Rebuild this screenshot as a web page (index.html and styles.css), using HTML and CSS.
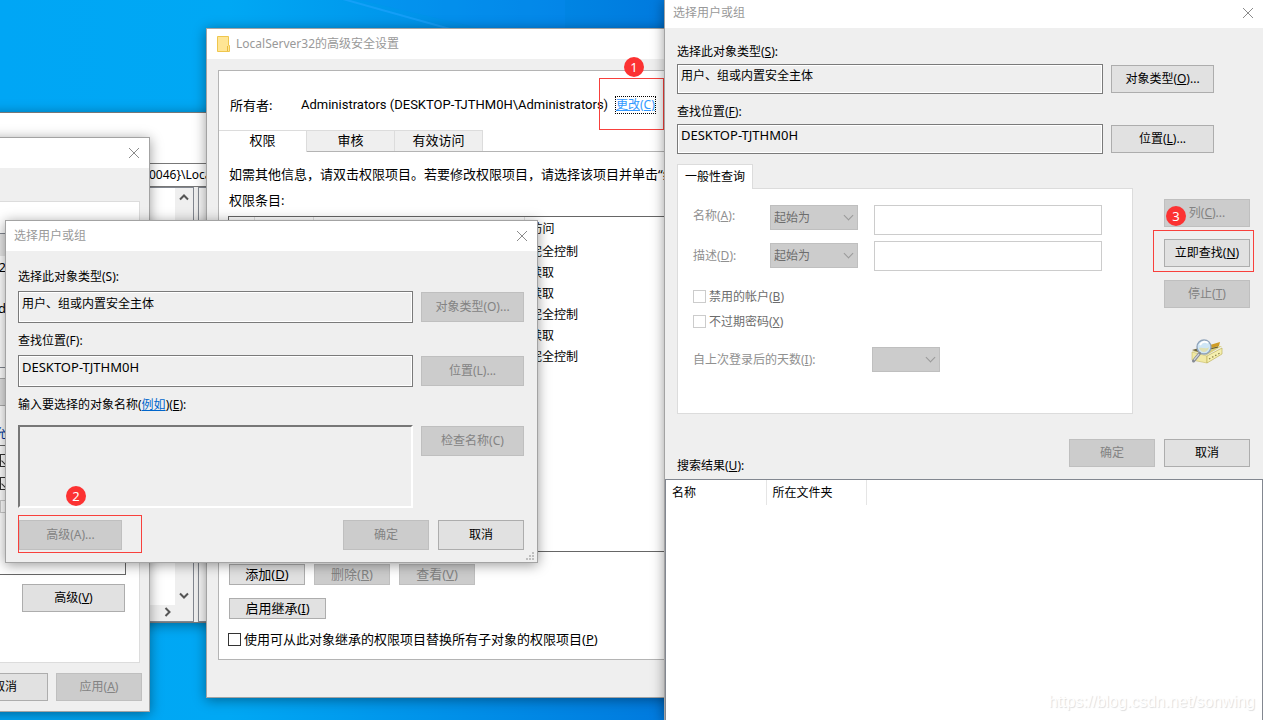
FILE: index.html
```html
<!DOCTYPE html>
<html lang="zh-CN">
<head>
<meta charset="utf-8">
<title>选择用户或组</title>
<link rel="stylesheet" href="styles.css">
</head>
<body>
<main class="desktop">
  <svg class="ray" viewBox="0 0 240 60" aria-hidden="true"><path d="M0-6 150 36" stroke="#22a4ff" stroke-width="2" opacity=".6"/><path d="M0-8 240 48V-8Z" fill="#0a8cf8" opacity=".25"/></svg>

  <section class="window editor">
    <div class="address">0046}\Loca</div>
    <div class="panes">
      <div class="tree">
        <div class="tree-row">
          <div class="vscroll">
            <svg viewBox="0 0 10 7" aria-hidden="true"><path d="M1 5.5 5 1.5 9 5.5" /></svg>
            <svg viewBox="0 0 10 7" aria-hidden="true"><path d="M1 1.5 5 5.5 9 1.5" /></svg>
          </div>
        </div>
        <div class="hscroll"><svg viewBox="0 0 7 10" aria-hidden="true"><path d="M1.5 1 5.5 5 1.5 9" /></svg></div>
      </div>
      <div class="values"></div>
    </div>
  </section>

  <section class="window perms">
    <header class="titlebar"><span></span><button class="close" aria-label="关闭"><svg viewBox="0 0 12 12"><path d="M1 1 11 11M11 1 1 11"/></svg></button></header>
    <div class="perms-panel">
      <div class="group-list"><div class="group-head"></div><span>2</span><span>d</span></div>
      <div class="perms-actions"><button class="btn">删除(R)...</button></div>
      <div class="perms-label">允</div>
      <div class="allow-list">
        <input type="checkbox" class="check" aria-label="完全控制" checked>
        <input type="checkbox" class="check" aria-label="读取" checked>
        <input type="checkbox" class="check" aria-label="特殊权限" disabled>
      </div>
      <div class="perms-more"><button class="btn">高级(<u>V</u>)</button></div>
    </div>
    <footer class="perms-foot"><button class="btn narrow">取消</button><button class="btn narrow" disabled>应用(<u>A</u>)</button></footer>
  </section>

  <section class="window advanced">
    <header class="titlebar">
      <span class="caption"><svg class="folder" viewBox="0 0 14 16" aria-hidden="true"><path d="M1.500.5h11v9h1v6H1.500Z" fill="#ffe594" stroke="#efc64d"/><path d="M11.500 10v5" stroke="#e9b93e"/></svg>LocalServer32的高级安全设置</span>
    </header>
    <div class="adv-panel">
      <div class="owner"><span class="owner-key">所有者:</span><span class="owner-name">Administrators (DESKTOP-TJTHM0H\Administrators)</span><a class="change" href="#">更改(C)</a></div>
      <nav class="tabs"><button class="tab active">权限</button><button class="tab">审核</button><button class="tab">有效访问</button></nav>
      <div class="adv-body">
        <p>如需其他信息，请双击权限项目。若要修改权限项目，请选择该项目并单击“编</p>
        <p>权限条目:</p>
        <div class="entries">
          <table>
            <colgroup><col class="c-icon"><col class="c-type"><col class="c-who"><col></colgroup>
            <thead><tr><th></th><th></th><th></th><th>访问</th></tr></thead>
            <tbody>
              <tr><td></td><td></td><td></td><td>完全控制</td></tr>
              <tr><td></td><td></td><td></td><td>读取</td></tr>
              <tr><td></td><td></td><td></td><td>读取</td></tr>
              <tr><td></td><td></td><td></td><td>完全控制</td></tr>
              <tr><td></td><td></td><td></td><td>读取</td></tr>
              <tr><td></td><td></td><td></td><td>完全控制</td></tr>
            </tbody>
          </table>
        </div>
        <div class="adv-actions"><button class="btn small">添加(<u>D</u>)</button><button class="btn small" disabled>删除(<u>R</u>)</button><button class="btn small" disabled>查看(<u>V</u>)</button></div>
        <button class="btn small inherit">启用继承(<u>I</u>)</button>
        <label class="replace"><input type="checkbox" class="check"><span>使用可从此对象继承的权限项目替换所有子对象的权限项目(<u>P</u>)</span></label>
      </div>
    </div>
  </section>
  <div class="mark mark-1"><b class="badge">1</b></div>

  <section class="window picker">
    <header class="titlebar"><span class="caption">选择用户或组</span><button class="close" aria-label="关闭"><svg viewBox="0 0 12 12"><path d="M1 1 11 11M11 1 1 11"/></svg></button></header>
    <form class="picker-form">
      <label class="wide" for="p-type">选择此对象类型(S):</label>
      <input id="p-type" class="field" readonly value="用户、组或内置安全主体"><button type="button" class="btn tall" disabled>对象类型(O)...</button>
      <label class="wide" for="p-loc">查找位置(F):</label>
      <input id="p-loc" class="field latin" readonly value="DESKTOP-TJTHM0H"><button type="button" class="btn tall" disabled>位置(L)...</button>
      <label class="wide" for="p-names">输入要选择的对象名称(<a href="#">例如</a>)(<u>E</u>):</label>
      <textarea id="p-names" class="names"></textarea><button type="button" class="btn tall check-names" disabled>检查名称(C)</button>
    </form>
    <footer class="picker-foot"><button class="btn tall" disabled>高级(A)...</button><span class="spacer"></span><button class="btn tall narrow" disabled>确定</button><button class="btn tall narrow">取消</button></footer>
    <svg class="grip" viewBox="0 0 8 8" aria-hidden="true"><path d="M6 0h2v2H6ZM3 3h2v2H3ZM6 3h2v2H6ZM0 6h2v2H0ZM3 6h2v2H3ZM6 6h2v2H6Z"/></svg>
    <div class="mark mark-2"><b class="badge">2</b></div>
  </section>

  <section class="window search">
    <header class="titlebar"><span class="caption">选择用户或组</span><button class="close" aria-label="关闭"><svg viewBox="0 0 12 12"><path d="M1 1 11 11M11 1 1 11"/></svg></button></header>
    <form class="search-form">
      <div class="search-top">
        <label class="wide" for="s-type">选择此对象类型(<u>S</u>):</label>
        <input id="s-type" class="field" readonly value="用户、组或内置安全主体"><button type="button" class="btn">对象类型(<u>O</u>)...</button>
        <label class="wide" for="s-loc">查找位置(<u>F</u>):</label>
        <input id="s-loc" class="field latin" readonly value="DESKTOP-TJTHM0H"><button type="button" class="btn">位置(<u>L</u>)...</button>
      </div>
      <div class="search-mid">
        <div class="query">
          <button type="button" class="query-tab">一般性查询</button>
          <div class="query-panel">
            <div class="query-row"><label for="q-name">名称(<u>A</u>):</label><span class="pick"><select id="q-name" disabled><option>起始为</option></select></span><input aria-label="名称" disabled></div>
            <div class="query-row"><label for="q-desc">描述(<u>D</u>):</label><span class="pick"><select id="q-desc" disabled><option>起始为</option></select></span><input aria-label="描述" disabled></div>
            <label class="opt first"><input type="checkbox" class="check" disabled><span>禁用的帐户(<u>B</u>)</span></label>
            <label class="opt"><input type="checkbox" class="check" disabled><span>不过期密码(<u>X</u>)</span></label>
            <div class="days"><label for="q-days">自上次登录后的天数(<u>I</u>):</label><span class="pick"><select id="q-days" disabled><option></option></select></span></div>
          </div>
        </div>
        <div class="search-side">
          <div class="cols"><button type="button" class="btn narrow" disabled>列(<u>C</u>)...</button><b class="badge">3</b></div>
          <div class="find"><button type="button" class="btn narrow">立即查找(<u>N</u>)</button><div class="mark mark-3"></div></div>
          <button type="button" class="btn narrow" disabled>停止(<u>T</u>)</button>
          <svg class="lens" viewBox="0 0 32 27" aria-hidden="true">
            <path d="M1 12 12 8 31 7 16 16Z" fill="#d9cf7c"/>
            <path d="M1 11 8 9 16 13 14 15Z" fill="#6e6440"/>
            <path d="M1 13 16 17V24L1 21Z" fill="#f1e9a4" stroke="#c9bc63" stroke-width=".6"/>
            <path d="M16 17 31 9V15L16 24Z" fill="#f5efaf" stroke="#b7a94c" stroke-width=".6"/>
            <path d="M18 20 29 14" stroke="#8b804a" stroke-width="1.2" stroke-dasharray="1.5 2"/>
            <path d="M19 6 29 3 28 7 20 9Z" fill="#cf9c25"/><path d="M19 10 27 8" stroke="#5c5130" stroke-width="1"/>
            <circle cx="13" cy="8" r="7" fill="#cfe6f5" stroke="#8fa3ba" stroke-width="1.3"/>
            <path d="M8 9c4-1 7 2 10-1-1 6-8 7-10 1Z" fill="#dfe0b4"/><path d="M9 6c2-4 6-4 8-2" stroke="#fff" stroke-width="2" fill="none"/>
            <path d="M8.500 14.500 2.500 22" stroke="#858a94" stroke-width="3" stroke-linecap="round"/><path d="M8 15 3 21" stroke="#d0d4da" stroke-width="1.200"/>
          </svg>
        </div>
      </div>
      <div class="search-foot"><span class="results-label">搜索结果(<u>U</u>):</span><span class="spacer"></span><button type="button" class="btn narrow" disabled>确定</button><button type="button" class="btn narrow">取消</button></div>
    </form>
    <div class="results"><table><thead><tr><th>名称</th><th>所在文件夹</th></tr></thead></table></div>
    <div class="watermark">https://blog.csdn.net/sonwing</div>
  </section>
</main>
</body>
</html>
```
FILE: styles.css
```css
* { box-sizing: border-box; }

body {
  margin: 0;
  font: 12px/16px "Noto Sans", "Noto Sans CJK SC", sans-serif;
  color: #000;
}

button, input, select, textarea { font: inherit; color: inherit; margin: 0; border-radius: 0; }
p { margin: 0; }
a { color: #0066cc; }

.desktop {
  position: relative;
  height: 100vh;
  overflow: hidden;
  background: linear-gradient(90deg, #00a6f5 0, #00a8f4 18%, #0078dd 54%, #0064d0 100%);
}
.ray { position: absolute; left: 325px; top: 0; width: 240px; height: 60px; }

/* windows */
.window {
  position: absolute;
  display: flex;
  flex-direction: column;
  background: #efefef;
  border: 1px solid #a3a3a3;
  box-shadow: 0 2px 12px rgba(0, 0, 0, .4);
}
.titlebar {
  display: flex;
  justify-content: space-between;
  align-items: center;
  height: 30px;
  padding: 0 9px 0 8px;
  background: #fff;
  color: #999;
}
.caption { display: flex; align-items: center; gap: 6px; }
.close { border: 0; background: none; padding: 0; width: 12px; height: 12px; }
.close svg { display: block; width: 12px; height: 12px; fill: none; stroke: #8b8b8b; }
.spacer { flex: 1; }

/* shared controls */
.btn {
  width: 103px;
  height: 28px;
  padding: 0;
  background: #e1e1e1;
  border: 1px solid #adadad;
  white-space: nowrap;
}
.btn.tall { height: 30px; }
.btn.narrow { width: 86px; }
.btn:disabled { background: #ccc; border-color: #bfbfbf; color: #838383; }
.check {
  appearance: none;
  flex: none;
  width: 13px;
  height: 13px;
  background: #fff;
  border: 1px solid #333;
}
.check:checked::after {
  content: "";
  display: block;
  width: 8px;
  height: 5px;
  margin: 2px 0 0 1px;
  border: solid #333;
  border-width: 0 0 1px 1px;
  transform: rotate(-45deg);
}
.check:disabled { border-color: #ccc; }
.field {
  width: 100%;
  min-width: 0;
  height: 30px;
  padding: 0 3px 8px;
  background: #efefef;
  border: 1px solid #7a7a7a;
  box-shadow: inset 0 0 0 1px #fff;
}
.latin { font-size: 13px; }
.wide { grid-column: 1 / -1; }
.badge {
  display: block;
  width: 20px;
  height: 20px;
  border-radius: 50%;
  background: #fc3232;
  color: #fff;
  font-size: 13px;
  font-weight: 400;
  line-height: 20px;
  text-align: center;
}
.mark { position: absolute; border: 1px solid #f8403c; }
.mark .badge { position: absolute; }

/* registry editor */
.editor { left: -10px; top: 112px; width: 700px; height: 511px; background: #fff; border-color: #777; }
.address {
  height: 24px;
  margin-top: 50px;
  padding: 3px 0 0 157px;
  border: 1px solid #777;
}
.panes { flex: 1; display: flex; gap: 4px; background: #efefef; }
.tree { width: 203px; display: flex; flex-direction: column; border: 1px solid #828790; background: #fff; }
.tree-row { flex: 1; display: flex; justify-content: flex-end; }
.vscroll {
  width: 18px;
  display: flex;
  flex-direction: column;
  justify-content: space-between;
  align-items: center;
  padding: 6px 0;
  background: #efefef;
}
.vscroll svg { width: 10px; height: 7px; fill: none; stroke: #555; stroke-width: 2; }
.hscroll { height: 16px; padding: 2px 22px; display: flex; justify-content: flex-end; background: #efefef; }
.hscroll svg { width: 7px; height: 10px; fill: none; stroke: #555; stroke-width: 2; }
.values { flex: 1; border: 1px solid #828790; background: #f7f7f7; }

/* permissions */
.perms { left: -260px; top: 137px; width: 410px; height: 575px; }
.perms-panel {
  margin: 33px 9px 0 0;
  height: 462px;
  padding: 31px 13px 0 0;
  background: #fff;
  border: 1px solid #dcdcdc;
}
.group-list { height: 135px; border: 1px solid #828790; padding-right: 119px; text-align: right; font-size: 13px; }
.group-head { height: 22px; margin-right: -119px; background: #e8e8e8; }
.group-list span { display: block; padding-top: 3px; height: 41px; }
.perms-actions { margin-top: 10px; padding-right: 117px; text-align: right; }
.perms-label { height: 39px; padding: 20px 119px 0 0; text-align: right; color: #003399; }
.allow-list {
  height: 130px;
  padding: 8px 112px 0 0;
  display: flex;
  flex-direction: column;
  align-items: flex-end;
  gap: 10px;
  border: 1px solid #666;
}
.perms-more { margin-top: 9px; padding-right: 1px; text-align: right; }
.perms-foot { display: flex; justify-content: flex-end; gap: 8px; padding: 10px 7px 0 0; }

/* advanced security */
.advanced { left: 206px; top: 28px; right: 580px; height: 670px; font-size: 13px; white-space: nowrap; overflow: hidden; }
.folder { width: 14px; height: 16px; }
.advanced .titlebar { flex: none; padding-left: 9px; font-size: 12px; }
.adv-panel { margin: 11px 0 0 11px; height: 590px; background: #fff; border: 1px solid #b4b4b4; }
.owner { display: flex; align-items: center; height: 59px; padding: 8px 0 0 11px; }
.owner-key { width: 71px; }
.owner-name { width: 315px; font-family: Roboto, "Noto Sans", sans-serif; }
.change { font-size: 12px; color: #3399ff; outline: 1px dotted #000; }
.tabs { display: flex; height: 22px; border-bottom: 1px solid #b4b4b4; }
.tab { width: 88px; padding: 0 0 2px; background: #efefef; border: 1px solid #dcdcdc; border-width: 1px 1px 0 0; }
.tab.active { background: #fff; margin-bottom: -1px; padding-bottom: 3px; }
.adv-body { padding: 14px 0 0 9px; }
.adv-body p { height: 26px; padding-left: 1px; }
.entries { height: 336px; margin-right: -4px; margin-top: -2px; border: 1px solid #666; }
.entries table { width: 100%; table-layout: fixed; border-collapse: collapse; font-size: 12px; }
.c-icon { width: 25px; }
.c-type { width: 59px; }
.c-who { width: 211px; }
.entries th { height: 24px; padding: 0 6px; border-right: 1px solid #e0e0e0; font-weight: 400; text-align: left; }
.entries td { height: 21px; padding: 0 6px; }
.adv-actions { display: flex; gap: 9px; margin: 12px 0 13px 1px; }
.btn.small { width: 76px; height: 21px; line-height: 16px; padding-bottom: 2px; }
.btn.small.inherit { display: block; width: 97px; margin-left: 1px; }
.replace { display: flex; align-items: center; gap: 3px; margin-top: 12px; }
.mark-1 { left: 599px; top: 78px; width: 65px; height: 52px; }
.mark-1 .badge { left: 24px; top: -22px; }

/* user picker */
.picker { left: 5px; top: 220px; width: 533px; height: 343px; }
.picker-form {
  display: grid;
  grid-template-columns: 1fr 103px;
  column-gap: 8px;
  padding: 18px 13px 0 12px;
}
.picker-form .wide { height: 22px; }
.picker .field { height: 32px; margin-bottom: 10px; }
.picker-form .btn { margin-top: 1px; }
.picker-form .check-names { margin-top: 7px; }
.names {
  height: 83px;
  margin-top: 6px;
  background: #efefef;
  border: 2px solid #fff;
  border-top-color: #777;
  border-left-color: #777;
  resize: none;
}
.picker-foot { display: flex; gap: 9px; padding: 12px 13px 0; }
.picker-foot .spacer { margin: 0 -9px 0 0; }
.grip { position: absolute; right: 3px; bottom: 2px; width: 8px; height: 8px; fill: #bfbfbf; }
.mark-2 { left: 12px; top: 294px; width: 124px; height: 38px; }
.mark-2 .badge { left: 47px; top: -30px; }

/* search dialog */
.search { left: 664px; top: -1px; right: 0; bottom: 0; border-width: 1px 0 0 1px; }
.search .titlebar { height: 28px; flex: none; padding: 0 9px 3px 8px; }
.search-form { padding: 16px 13px 0 12px; }
.search-top { display: grid; grid-template-columns: 1fr 103px; gap: 0 8px; padding-right: 36px; }
.search-top .wide { height: 20px; }
.search-top .field { margin-bottom: 10px; }
.search-top .btn { margin-top: 1px; }
.search-mid { display: flex; gap: 31px; }
.query { flex: 1; display: flex; flex-direction: column; }
.query-tab {
  position: relative;
  width: 76px;
  height: 25px;
  margin-bottom: -1px;
  padding: 0;
  background: #fff;
  border: 1px solid #dcdcdc;
  border-bottom: 0;
}
.query-panel { height: 226px; padding: 16px 30px 0 15px; background: #fff; border: 1px solid #dcdcdc; color: #909090; }
.query-row { display: flex; align-items: flex-start; height: 36px; }
.query-row label { width: 77px; padding-top: 3px; }
.query-row + .query-row label { padding-top: 7px; }
.query-row + .query-row .pick { margin-top: 2px; }
.query-row > input { flex: 1; min-width: 0; height: 30px; border: 1px solid #ccc; background: #fff; }
.pick { position: relative; width: 88px; margin-right: 16px; }
.pick select {
  display: block;
  appearance: none;
  width: 100%;
  height: 25px;
  padding: 0 3px;
  background: #ccc;
  border: 1px solid #bfbfbf;
  color: #6d6d6d;
  opacity: 1;
}
.pick::after {
  content: "";
  position: absolute;
  right: 6px;
  top: 7px;
  width: 6px;
  height: 6px;
  border: solid #9a9a9a;
  border-width: 0 1px 1px 0;
  transform: rotate(45deg);
}
.opt { display: flex; align-items: center; gap: 3px; height: 25px; color: #6d6d6d; }
.opt.first { margin-top: 7px; }
.days { display: flex; align-items: center; margin-top: 13px; height: 25px; }
.days label { width: 179px; }
.days .pick { width: 68px; }
.search-side { display: flex; flex-direction: column; padding-top: 35px; }
.cols, .find { position: relative; }
.cols .btn, .find .btn { display: block; }
.cols .badge { position: absolute; left: 2px; top: 7px; }
.find { margin: 12px 0 13px; }
.mark-3 { left: -11px; top: -9px; width: 101px; height: 42px; pointer-events: none; }
.lens { width: 32px; height: 27px; margin: 31px 0 0 27px; }
.search-foot { display: flex; gap: 9px; padding-top: 25px; }
.results-label { padding-top: 19px; }
.results { flex: 1; margin-top: 5px; border: 1px solid #828790; border-bottom: 0; background: #fff; }
.results table { border-collapse: collapse; }
.results th { width: 100px; height: 25px; padding: 0 6px; border-right: 1px solid #e5e5e5; font-weight: 400; text-align: left; }
.watermark {
  position: absolute;
  right: 8px;
  bottom: 8px;
  font: 16px/20px "Liberation Sans", sans-serif;
  color: #fff;
  text-shadow: 1px 1px 1px #ddd;
}
```
